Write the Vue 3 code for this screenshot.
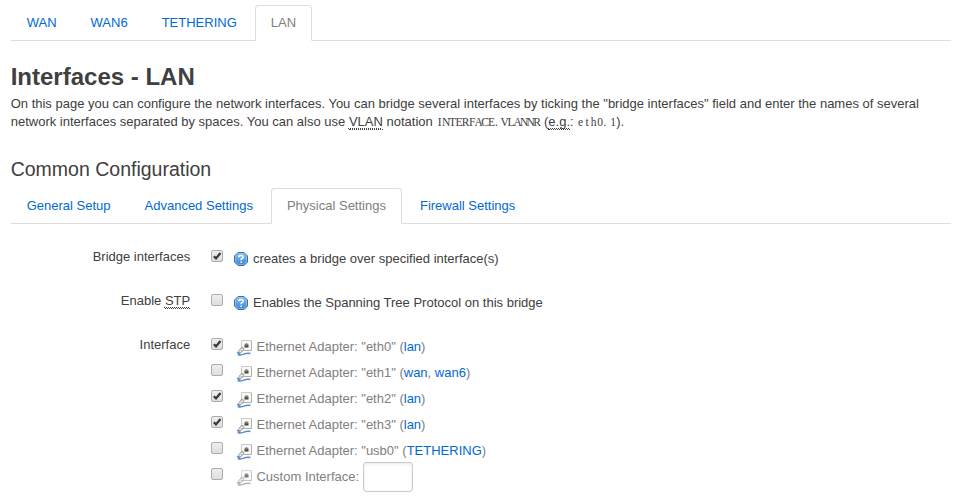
<script setup>
const mainTabs = ['WAN', 'WAN6', 'TETHERING', 'LAN']
const subTabs = ['General Setup', 'Advanced Settings', 'Physical Settings', 'Firewall Settings']
const adapters = [
  { name: 'eth0', nets: ['lan'], on: true },
  { name: 'eth1', nets: ['wan', 'wan6'], on: false },
  { name: 'eth2', nets: ['lan'], on: true },
  { name: 'eth3', nets: ['lan'], on: true },
  { name: 'usb0', nets: ['TETHERING'], on: false },
  { name: '', nets: [], on: false },
]
const options = [
  { label: 'Bridge interfaces', abbr: '', on: true, help: 'creates a bridge over specified interface(s)' },
  { label: 'Enable ', abbr: 'STP', on: false, help: 'Enables the Spanning Tree Protocol on this bridge' },
]
</script>

<template>
  <main class="page">
    <ul class="tabs">
      <li v-for="t in mainTabs" :key="t" :class="{ active: t === 'LAN' }"><a>{{ t }}</a></li>
    </ul>
    <h2>Interfaces - LAN</h2>
    <p class="descr">
      On this page you can configure the network interfaces. You can bridge several interfaces by ticking the "bridge interfaces" field and enter the names of several<br>
      network interfaces separated by spaces. You can also use <abbr>VLAN</abbr> notation <samp><span v-for="(c, i) in 'INTERFACE.VLANNR'" :key="i" :class="{ dot: c === '.' }">{{ c }}</span></samp> (<abbr>e.g.</abbr>: <samp><span v-for="(c, i) in 'eth0.1'" :key="i" :class="{ dot: c === '.' }">{{ c }}</span></samp>).
    </p>
    <h3>Common Configuration</h3>
    <ul class="tabs">
      <li v-for="t in subTabs" :key="t" :class="{ active: t === 'Physical Settings' }"><a>{{ t }}</a></li>
    </ul>

    <section class="form">
      <div v-for="o in options" :key="o.label" class="row option">
        <label class="title">{{ o.label }}<abbr v-if="o.abbr">{{ o.abbr }}</abbr></label>
        <span class="check"><svg v-if="o.on" viewBox="0 0 12 12"><path d="M2.800 6.200 5 8.400 9.500 3" /></svg></span>
        <svg class="help" viewBox="0 0 14 14">
          <defs>
            <linearGradient id="blue" x1="0" y1="0" x2="0" y2="1">
              <stop offset="0" stop-color="#8cc0ee" /><stop offset="1" stop-color="#3687d3" />
            </linearGradient>
          </defs>
          <path d="M4 .5h6L13.500 4v6L10 13.500H4L.5 10V4z" fill="url(#blue)" stroke="#41709f" />
          <path d="M4.300 1.500h5.400l2.800 2.800v5.400l-2.800 2.800H4.300L1.500 9.700V4.300z" fill="none" stroke="#9dcbf1" stroke-width=".6" />
          <path d="M4.800 5.200V4.500Q5.200 3.500 7 3.500T9.200 5.200Q9.200 6.200 7.200 7V8.300M7.200 9.500V11" fill="none" stroke="#fff" stroke-width="1.500" />
        </svg>
        <span class="hint">{{ o.help }}</span>
      </div>

      <div class="row group">
        <label class="title">Interface</label>
        <ul class="adapters">
          <li v-for="a in adapters" :key="a.name">
            <span class="check"><svg v-if="a.on" viewBox="0 0 12 12"><path d="M2.800 6.200 5 8.400 9.500 3" /></svg></span>
            <svg class="port" :class="{ off: !a.name }" viewBox="0 0 16 16">
              <path d="M5.500.5h10v10h-10z" fill="#f7f7f5" stroke="#cbcbc8" />
              <path d="M15.500 1v9.500H6" fill="none" stroke="#b0b0ad" />
              <path class="jack" d="M8.500 4.500h1v-1h2v1h1v3h-4z" />
              <path class="pin" d="M9.500 4.500h2v1h-2z" />
              <path class="cable" d="M1 12.800C4 12 5 12.500 2.500 14.700C6 16 8 12.600 14.500 13.500" />
              <path d="M3.500 9.500 6 7 8 8.500 7 11 4 13 2.500 12z" fill="#e9e9e7" stroke="#909090" stroke-width=".8" />
              <path d="M4.500 10 6.500 11M6 7.500V9" fill="none" stroke="#888" stroke-width=".6" />
            </svg>
            <span v-if="a.name" class="name">Ethernet Adapter: "{{ a.name }}" (<template v-for="(n, i) in a.nets" :key="n"><template v-if="i">, </template><a>{{ n }}</a></template>)</span>
            <template v-else><span class="name">Custom Interface:</span><input type="text"></template>
          </li>
        </ul>
      </div>
    </section>
  </main>
</template>

<style>
body { background: #fff; }
</style>

<style scoped>
.page {
  box-sizing: border-box;
  width: 964px;
  height: 502px;
  overflow: hidden;
  padding: 5px 13px 0 10.700px;
  font: 13px/18px "Liberation Sans", Arial, sans-serif;
  color: #404040;
}
ul { list-style: none; margin: 0; padding: 0; }
a { color: #0069d6; }
.tabs { display: flex; height: 35px; border-bottom: 1px solid #ddd; }
.tabs a {
  display: block;
  box-sizing: border-box;
  height: 36px;
  margin-right: 2px;
  padding: 0 15px;
  border: 1px solid transparent;
  border-radius: 4px 4px 0 0;
  line-height: 34px;
}
.tabs .active a { color: #808080; background: #fff; border-color: #ddd; border-bottom-color: #fff; }
h2 { margin: 18px 0 0; font-size: 24px; line-height: 36px; }
.descr { margin: 0; white-space: nowrap; }
h3 { margin: 19px 0 0; font-size: 19.500px; font-weight: normal; line-height: 38px; }
abbr {
  border-bottom: 1px dotted #404040;
  text-decoration: underline dotted #404040 1px;
  text-decoration-skip-ink: none;
  text-underline-offset: 2px;
}
samp { display: inline-flex; font: 11.500px/12px "Liberation Serif", serif; }
samp span { display: flex; justify-content: center; width: 6.500px; }
samp .dot { justify-content: flex-start; }
.form { padding-top: 24px; }
.row { display: flex; }
.option { height: 44px; }
.title { width: 179.500px; margin-right: 20.800px; text-align: right; }
.check {
  box-sizing: border-box;
  flex: none;
  width: 12px;
  height: 12px;
  margin-top: 2px;
  border: 1px solid #adadad;
  border-radius: 2px;
  background: linear-gradient(#eee, #dedede);
}
.check svg { display: block; width: 12px; height: 12px; margin: -1px; }
.check path { fill: none; stroke: #383838; stroke-width: 2.200; }
.help { flex: none; width: 14px; height: 14px; margin: 4px 5px 0 11px; }
.hint { padding-top: 2px; }
.adapters li { display: flex; height: 26px; }
.port { flex: none; width: 16px; height: 16px; margin: 4px 4px 0 13.500px; }
.jack { fill: #454545; }
.pin { fill: #c8b635; }
.cable { fill: none; stroke: #5b8bc9; stroke-width: 1.500; }
.off { opacity: .75; }
.off .pin { fill: #777; }
.off .cable { stroke: #999; }
.name { padding-top: 2px; color: #808080; }
input {
  box-sizing: border-box;
  width: 50px;
  height: 30px;
  margin: -4px 0 0 4px;
  border: 1px solid #ccc;
  border-radius: 3px;
  box-shadow: inset 0 1px 3px rgba(0, 0, 0, .1);
}
</style>
